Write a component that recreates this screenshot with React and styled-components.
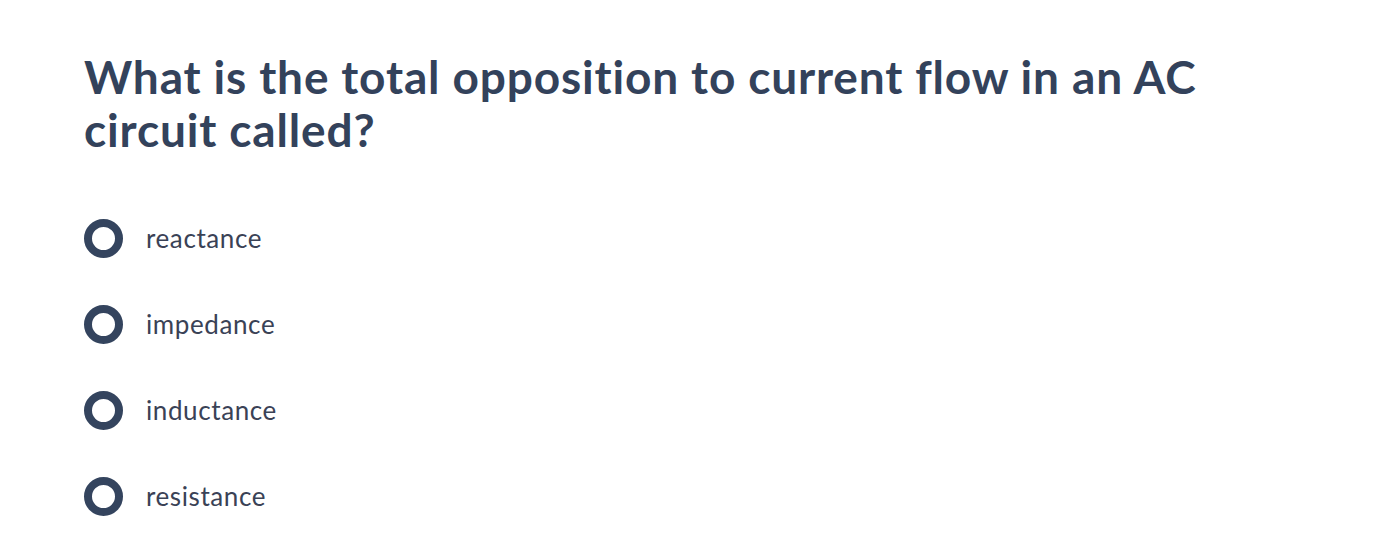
import React from "react";
import styled, { createGlobalStyle } from "styled-components";

const Global = createGlobalStyle`
  html, body { margin: 0; padding: 0; background: #ffffff; }
  body { font-family: Lato, "Open Sans", sans-serif; }
`;

const Page = styled.main`
  padding: 50px 84px 0 84px;
`;

const Question = styled.h1`
  margin: 0;
  font-family: Lato, sans-serif;
  font-weight: 700;
  font-size: 46px;
  line-height: 53px;
  letter-spacing: 0.85px;
  font-variant-ligatures: none;
  color: #33425b;
  max-width: 1160px;
`;

const Options = styled.ul`
  list-style: none;
  margin: 39px 0 0 0;
  padding: 0;
  display: flex;
  flex-direction: column;
`;

const Option = styled.li`
  height: 86px;
  display: flex;
  align-items: center;
  gap: 23px;
  cursor: pointer;
`;

const Radio = styled.span`
  box-sizing: border-box;
  width: 39px;
  height: 39px;
  border-radius: 50%;
  border: 8px solid #34445e;
  flex: none;
`;

const Label = styled.span`
  font-family: Lato, sans-serif;
  font-size: 26px;
  letter-spacing: 0.6px;
  font-variant-ligatures: none;
  color: #3a4256;
`;

const answers = ["reactance", "impedance", "inductance", "resistance"];

export default function App() {
  return (
    <>
      <Global />
      <Page>
        <Question>
          What is the total opposition to current flow in an AC circuit called?
        </Question>
        <Options>
          {answers.map((a) => (
            <Option key={a}>
              <Radio />
              <Label>{a}</Label>
            </Option>
          ))}
        </Options>
      </Page>
    </>
  );
}
